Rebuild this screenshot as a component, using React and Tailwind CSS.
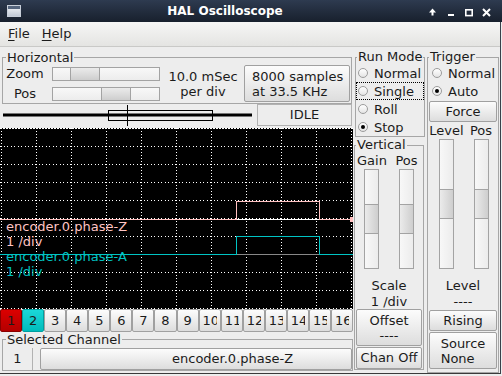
import React from 'react';

const btn = 'border border-[#a0a0a0] rounded-[2px] bg-gradient-to-b from-[#fcfcfc] to-[#dddddd]';

const HSlider = ({ handle }) => (
  <div className="flex h-[14px] w-[108px] border border-[#a3a3a3] bg-gradient-to-b from-[#f8f8f8] to-[#ececec]">
    <div className={`h-full w-[30px] border-x border-[#a3a3a3] bg-gradient-to-b from-[#ebebeb] to-[#cecece] ${handle}`} />
  </div>
);

const VSlider = ({ h, handle }) => (
  <div className={`flex flex-col w-[15px] border border-[#a3a3a3] bg-gradient-to-r from-[#f8f8f8] to-[#ececec] ${h}`}>
    <div className={`w-full h-[30px] border-y border-[#a3a3a3] bg-gradient-to-r from-[#ebebeb] to-[#cecece] ${handle}`} />
  </div>
);

const Radio = ({ label, checked, focus, pad }) => (
  <div className={`flex items-center h-[18px] ${pad} ${focus ? 'outline-1 outline-dotted outline-black -outline-offset-1' : ''}`}>
    <div className="flex items-center justify-center w-[10px] h-[10px] rounded-full border border-[#9c9c9c] bg-gradient-to-b from-[#ffffff] to-[#e4e4e4]">
      {checked && <div className="w-[4px] h-[4px] rounded-full bg-black" />}
    </div>
    <span className="ml-[6px] leading-none">{label}</span>
  </div>
);

const Legend = ({ children }) => (
  <legend className="ml-[1px] px-[1px] leading-[14px] whitespace-nowrap">{children}</legend>
);

const chanColors = [
  'border border-[#8a0000] rounded-[2px] bg-gradient-to-b from-[#dc0000] to-[#b40000]',
  'border border-[#00a0a0] rounded-[2px] bg-gradient-to-b from-[#1ad8d8] to-[#00bcbc]',
];

const Grid = () => {
  const xs = Array.from({ length: 11 }, (_, k) => 1.5 + 35 * k);
  const ys = Array.from({ length: 11 }, (_, k) => 0.5 + 18 * k);
  return (
    <svg width="353" height="181" className="block" shapeRendering="crispEdges">
      {xs.map((x) => (
        <line key={'v' + x} x1={x} y1="0" x2={x} y2="181" stroke="#fff" strokeDasharray="1 2" />
      ))}
      {ys.map((y, i) => (
        <line key={'h' + y} x1="0" y1={y} x2="353" y2={y} stroke="#fff" strokeDasharray={i === 0 ? '2 1' : '1 2.5'} />
      ))}
      {/* channel 1 */}
      <path d="M0 91.5H236.5" stroke="#ffc0c0" fill="none" />
      <path d="M236.5 91.5V73.5H319.5V91.5" stroke="#ffc0c0" fill="none" />
      <path d="M237 91.5H319" stroke="#ffffff" fill="none" />
      <path d="M320 91.5H353" stroke="#ffc0c0" fill="none" />
      <rect x="350" y="89" width="3" height="5" fill="#ffc0c0" />
      {/* channel 2 */}
      <path d="M0 126.5H236.5" stroke="#00c4c4" fill="none" />
      <path d="M236.5 126.5V108.5H319.5V126.5" stroke="#00c4c4" fill="none" />
      <path d="M237 126.5H319" stroke="#888888" fill="none" />
      <path d="M320 126.5H353" stroke="#00c4c4" fill="none" />
    </svg>
  );
};

export default function App() {
  return (
    <div className="w-[502px] h-[376px] overflow-hidden bg-[#ededed] font-['DejaVu_Sans',sans-serif] text-[13px] text-[#1b1b1b]">
      {/* Title bar */}
      <div className="flex h-[22px] items-center bg-gradient-to-b from-[#2e3b50] to-[#18202d]">
        <div className="w-[25px] pl-[7px]">
          <div className="w-[14px] h-[12px] border border-[#c8cfd9] bg-gradient-to-b from-[#f5f7f9] to-[#c2cad6]">
            <div className="h-[3px] bg-[#55657d]" />
          </div>
        </div>
        <div className="flex-1 text-center text-[12px] font-bold text-white leading-none">HAL Oscilloscope</div>
        <svg width="77" height="22" className="shrink-0">
          <polygon points="4,12.5 7.5,8.5 11,12.5" fill="#fff" />
          <rect x="6.5" y="12" width="2" height="3.5" fill="#fff" />
          <rect x="23" y="14" width="6" height="2" fill="#fff" />
          <rect x="40.8" y="9.8" width="6.4" height="5.8" fill="none" stroke="#fff" strokeWidth="1.6" />
          <path d="M58 9L65 16M65 9L58 16" stroke="#fff" strokeWidth="2" />
        </svg>
      </div>

      <div className="w-[501px] border-r border-[#3a404a]">
        {/* Menu bar */}
        <div className="flex h-[25px] items-center border-b border-[#c9c9c7] bg-gradient-to-b from-[#f6f6f5] to-[#e4e4e2]">
          <span className="ml-[8px]"><span className="underline underline-offset-[2px]">F</span>ile</span>
          <span className="ml-[12px]"><span className="underline underline-offset-[2px]">H</span>elp</span>
        </div>

        {/* Body */}
        <div className="flex h-[327px] border-b border-[#3a3a3a]">
          {/* Left column */}
          <div className="w-[353px] flex flex-col">
            <fieldset className="mt-[3px] ml-[2px] w-[350px] border border-[#a6a6a6]">
              <legend className="ml-[3px] px-[1px] leading-[15px]">Horizontal</legend>
              <div className="flex h-[38px]">
                <div className="flex flex-col">
                  <div className="flex items-center h-[14px] mt-[2px]">
                    <div className="w-[44px] text-center">Zoom</div>
                    <div className="ml-[5px]"><HSlider handle="ml-[17px]" /></div>
                  </div>
                  <div className="flex items-center h-[14px] mt-[6px]">
                    <div className="w-[44px] text-center">Pos</div>
                    <div className="ml-[5px]"><HSlider handle="ml-[48px]" /></div>
                  </div>
                </div>
                <div className="ml-[2px] w-[82px] mt-[4px] text-center leading-[15px]">
                  <div>10.0 mSec</div>
                  <div>per div</div>
                </div>
                <div className={`w-[106px] h-[37px] flex flex-col justify-center pl-[7px] leading-[15px] ${btn}`}>
                  <div>8000 samples</div>
                  <div>at 33.5 KHz</div>
                </div>
              </div>
            </fieldset>

            <div className="flex h-[22px]">
              <svg width="250" height="22" className="ml-[2px] block">
                <line x1="1" y1="11" x2="250" y2="11" stroke="#000" strokeWidth="3" />
                <rect x="106.5" y="6.5" width="104" height="10" fill="none" stroke="#000" />
                <line x1="125.5" y1="1" x2="125.5" y2="22" stroke="#000" />
              </svg>
              <div className="ml-[5px] w-[95px] h-[22px] border border-[#b2b2b2] flex items-center justify-center">IDLE</div>
            </div>

            <div className="mt-[2px] h-[181px] w-[353px] bg-black relative">
              <Grid />
              <div className="absolute left-[6px] top-[91px] leading-[15px]">
                <div className="text-[#ffc4c4]">encoder.0.phase-Z</div>
                <div className="text-[#ffc4c4]">1 /div</div>
                <div className="text-[#00c4c4]">encoder.0.phase-A</div>
                <div className="text-[#00c4c4]">1 /div</div>
              </div>
            </div>

            <div className="flex h-[23px] w-[353px]">
              {Array.from({ length: 16 }, (_, i) => (
                <div key={i} className={`flex-1 min-w-0 px-[3px] leading-[21px] ${i < 2 ? chanColors[i] : btn}`}>
                  <div className="w-full overflow-hidden whitespace-nowrap text-center">{i + 1}</div>
                </div>
              ))}
            </div>

            <fieldset className="ml-[2px] w-[351px] border border-[#a6a6a6]">
              <legend className="ml-[3px] px-[1px] leading-[15px]">Selected Channel</legend>
              <div className="flex h-[22px] mt-[1px]">
                <div className="w-[30px] border-r border-[#b2b2b2] flex items-center justify-center">1</div>
                <div className={`ml-[7px] flex-1 flex items-center pl-[131px] ${btn}`}>encoder.0.phase-Z</div>
              </div>
            </fieldset>
          </div>

          {/* Right column */}
          <div className="flex">
            <div className="w-[72px] flex flex-col">
              <fieldset className="mt-[3px] ml-[2px] w-[70px] border border-[#a6a6a6]">
                <Legend>Run Mode</Legend>
                <Radio label="Normal" pad="pl-[2px]" />
                <Radio label="Single" pad="pl-[2px]" focus />
                <Radio label="Roll" pad="pl-[2px]" />
                <Radio label="Stop" pad="pl-[2px]" checked />
              </fieldset>
              <fieldset className="mt-[1px] ml-[1px] w-[70px] border border-[#a6a6a6]">
                <Legend>Vertical</Legend>
                <div className="flex mt-[1px] h-[15px] leading-[15px]">
                  <div className="ml-[2px] w-[29px] text-center">Gain</div>
                  <div className="ml-[6px] w-[29px] text-center">Pos</div>
                </div>
                <div className="flex mt-[1px]">
                  <div className="ml-[2px] w-[29px] flex justify-center"><VSlider h="h-[100px]" handle="mt-[34px]" /></div>
                  <div className="ml-[6px] w-[29px] flex justify-center"><VSlider h="h-[100px]" handle="mt-[34px]" /></div>
                </div>
                <div className="mt-[9px] text-center">
                  <div className="h-[16px] leading-[16px]">Scale</div>
                  <div className="h-[15px] leading-[15px]">1 /div</div>
                </div>
                <div className={`mx-[1px] h-[37px] flex flex-col justify-center items-center leading-[15px] ${btn}`}>
                  <div>Offset</div>
                  <div>----</div>
                </div>
                <div className={`mx-[1px] mt-[1px] h-[22px] flex items-center justify-center ${btn}`}>Chan Off</div>
              </fieldset>
            </div>

            <fieldset className="mt-[3px] ml-[2px] w-[72px] border border-[#a6a6a6]">
              <Legend>Trigger</Legend>
              <Radio label="Normal" pad="pl-[4px]" />
              <Radio label="Auto" pad="pl-[4px]" checked />
              <div className={`mx-[1px] mt-[1px] h-[21px] flex items-center justify-center ${btn}`}>Force</div>
              <div className="flex mt-[1px] h-[15px] leading-[15px]">
                <div className="ml-[1px] w-[35px] text-center">Level</div>
                <div className="w-[34px] text-center">Pos</div>
              </div>
              <div className="flex mt-[1px]">
                <div className="ml-[1px] w-[35px] flex justify-center"><VSlider h="h-[130px]" handle="mt-[49px]" /></div>
                <div className="w-[34px] flex justify-center"><VSlider h="h-[130px]" handle="mt-[49px]" /></div>
              </div>
              <div className="mt-[9px] text-center">
                <div className="h-[16px] leading-[16px]">Level</div>
                <div className="h-[15px] leading-[15px]">----</div>
              </div>
              <div className={`mx-[1px] mt-[1px] h-[21px] flex items-center justify-center ${btn}`}>Rising</div>
              <div className={`mx-[1px] mt-[1px] h-[37px] flex items-center justify-center ${btn}`}>
                <div className="text-left leading-[15px]">
                  <div>Source</div>
                  <div>None</div>
                </div>
              </div>
            </fieldset>
          </div>
        </div>
      </div>
    </div>
  );
}
